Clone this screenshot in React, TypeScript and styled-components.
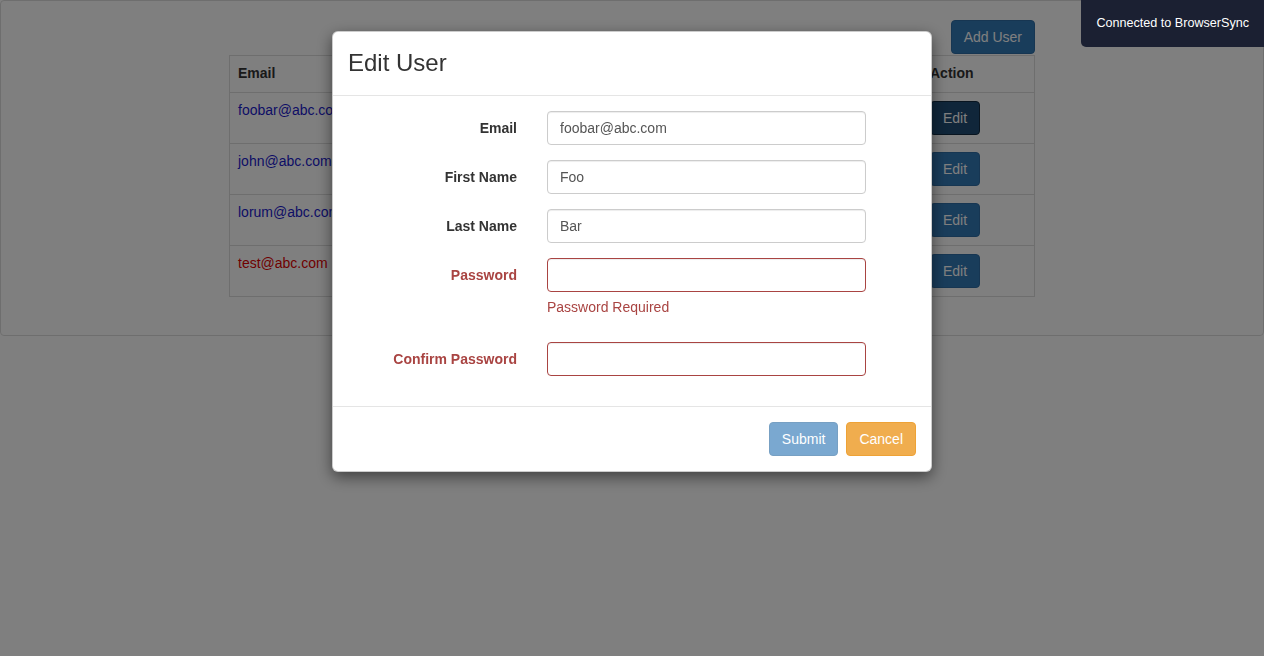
import React from "react";
import styled, { createGlobalStyle, css } from "styled-components";

const GlobalStyle = createGlobalStyle`
  * { box-sizing: border-box; }
  html, body { margin: 0; padding: 0; }
  body {
    font-family: "Liberation Sans", Arial, sans-serif;
    font-size: 14px;
    line-height: 1.42857;
    color: #333;
    background: #fff;
  }
`;

const Panel = styled.div`
  border: 1px solid #ddd;
  border-radius: 4px;
  padding: 19px 0 39px;
  height: 336px;
`;

const Container = styled.div`
  width: 806px;
  margin: 0 auto;
  display: flex;
  flex-direction: column;
  align-items: flex-end;
`;

const Button = styled.button<{ $variant?: "primary" | "warning"; $active?: boolean; $disabled?: boolean }>`
  font-family: inherit;
  font-size: 14px;
  line-height: 20px;
  padding: 6px 12px;
  border-radius: 4px;
  border: 1px solid #2e6da4;
  color: #fff;
  background: #337ab7;
  cursor: pointer;
  ${(p) =>
    p.$variant === "warning" &&
    css`
      background: #f0ad4e;
      border-color: #eea236;
    `}
  ${(p) =>
    p.$active &&
    css`
      background: #204d74;
      border-color: #122b40;
    `}
  ${(p) =>
    p.$disabled &&
    css`
      opacity: 0.65;
      cursor: not-allowed;
    `}
`;

const AddButton = styled(Button)`
  margin-bottom: 1px;
`;

const Table = styled.table`
  width: 100%;
  border-collapse: collapse;
  border: 1px solid #ddd;
  th, td {
    border: 1px solid #ddd;
    padding: 8px;
    text-align: left;
    vertical-align: top;
  }
  th { font-weight: bold; }
`;

const MailCell = styled.td<{ $bad?: boolean }>`
  color: ${(p) => (p.$bad ? "#e00000" : "#1a1acc")};
`;

const Backdrop = styled.div`
  position: fixed;
  inset: 0;
  background: rgba(0, 0, 0, 0.5);
`;

const ModalWrap = styled.div`
  position: fixed;
  inset: 0;
`;

const Dialog = styled.div`
  width: 600px;
  margin: 31px auto;
  background: #fff;
  border: 1px solid rgba(0, 0, 0, 0.2);
  border-radius: 6px;
  box-shadow: 0 5px 15px rgba(0, 0, 0, 0.5);
`;

const Header = styled.div`
  padding: 15px;
  border-bottom: 1px solid #e5e5e5;
`;

const Title = styled.h3`
  margin: 0;
  font-size: 24px;
  font-weight: normal;
  line-height: 32px;
  padding-bottom: 1px;
  color: #333;
`;

const Body = styled.div`
  padding: 15px;
`;

const Group = styled.div`
  display: grid;
  grid-template-columns: 169px 319px;
  column-gap: 30px;
  margin-bottom: 15px;
`;

const Label = styled.label<{ $error?: boolean }>`
  font-weight: bold;
  text-align: right;
  padding-top: 8px;
  white-space: nowrap;
  color: ${(p) => (p.$error ? "#a94442" : "#333")};
`;

const Input = styled.input<{ $error?: boolean }>`
  display: block;
  width: 100%;
  height: 34px;
  padding: 6px 12px;
  font-family: inherit;
  font-size: 14px;
  color: #555;
  background: #fff;
  border: 1px solid ${(p) => (p.$error ? "#a94442" : "#ccc")};
  border-radius: 4px;
  box-shadow: inset 0 1px 1px rgba(0, 0, 0, 0.075);
  outline: none;
`;

const Help = styled.span`
  grid-column: 2;
  display: block;
  margin: 6px 0 9px;
  color: #a94442;
`;

const Footer = styled.div`
  padding: 15px;
  border-top: 1px solid #e5e5e5;
  display: flex;
  justify-content: flex-end;
  gap: 8px;
`;

const Notify = styled.div`
  position: fixed;
  top: 0;
  right: 0;
  padding: 15px;
  font-size: 12.6px;
  line-height: 17px;
  color: #fff;
  background: #1b2032;
  border-bottom-left-radius: 5px;
`;

const users = [
  { email: "foobar@abc.com", first: "Foo", last: "Bar" },
  { email: "john@abc.com", first: "John", last: "Doe" },
  { email: "lorum@abc.com", first: "Lorum", last: "Ipsum" },
  { email: "test@abc.com", first: "Test", last: "User", bad: true },
];

export default function App() {
  return (
    <>
      <GlobalStyle />
      <Panel>
        <Container>
          <AddButton $variant="primary">Add User</AddButton>
          <Table>
            <thead>
              <tr>
                <th style={{ width: 240 }}>Email</th>
                <th>First Name</th>
                <th>Last Name</th>
                <th style={{ width: 113 }}>Action</th>
              </tr>
            </thead>
            <tbody>
              {users.map((u, i) => (
                <tr key={u.email}>
                  <MailCell $bad={u.bad}>{u.email}</MailCell>
                  <td>{u.first}</td>
                  <td>{u.last}</td>
                  <td>
                    <Button $active={i === 0}>Edit</Button>
                  </td>
                </tr>
              ))}
            </tbody>
          </Table>
        </Container>
      </Panel>
      <Backdrop />
      <ModalWrap>
        <Dialog>
          <Header>
            <Title>Edit User</Title>
          </Header>
          <Body>
            <Group>
              <Label>Email</Label>
              <Input defaultValue="foobar@abc.com" />
            </Group>
            <Group>
              <Label>First Name</Label>
              <Input defaultValue="Foo" />
            </Group>
            <Group>
              <Label>Last Name</Label>
              <Input defaultValue="Bar" />
            </Group>
            <Group>
              <Label $error>Password</Label>
              <Input $error type="password" />
              <Help>Password Required</Help>
            </Group>
            <Group>
              <Label $error>Confirm Password</Label>
              <Input $error type="password" />
            </Group>
          </Body>
          <Footer>
            <Button $variant="primary" $disabled>Submit</Button>
            <Button $variant="warning">Cancel</Button>
          </Footer>
        </Dialog>
      </ModalWrap>
      <Notify>Connected to BrowserSync</Notify>
    </>
  );
}
